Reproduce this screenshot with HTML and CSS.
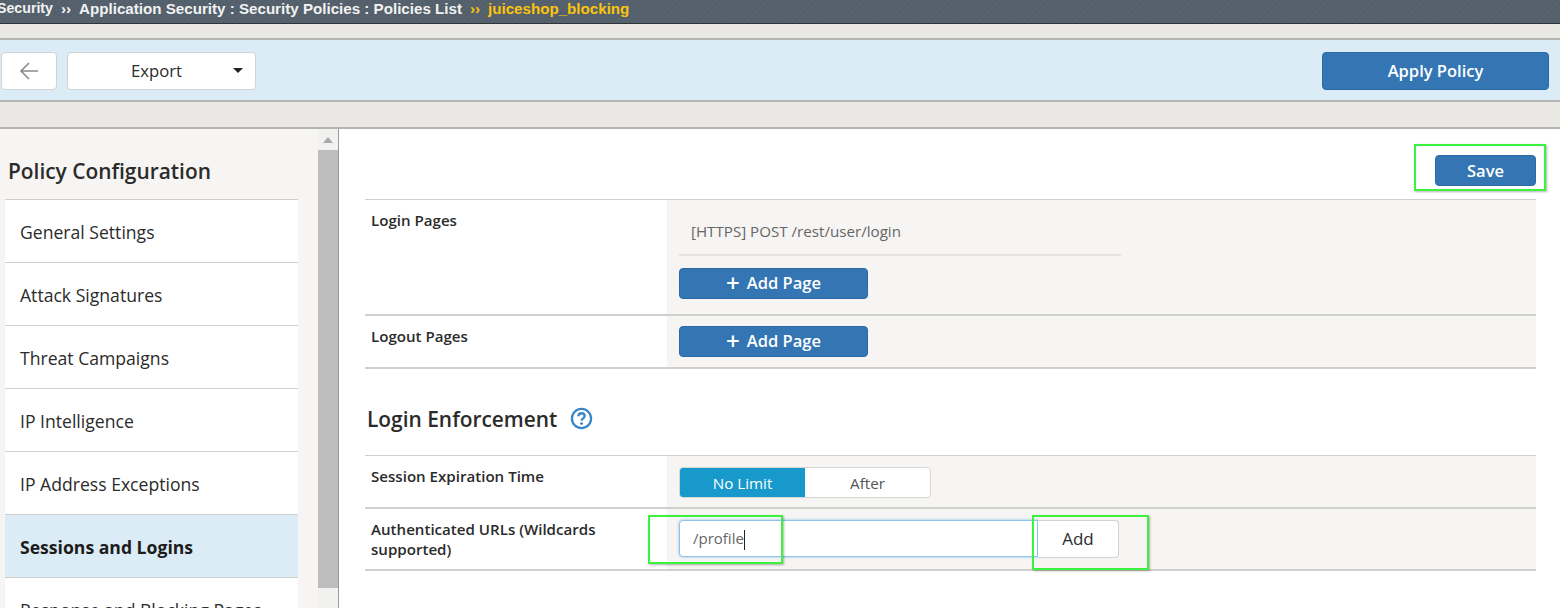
FILE: index.html
```html
<!DOCTYPE html>
<html lang="en">
<head>
    <meta charset="UTF-8">
    <title>Sessions and Logins</title>
    <link rel="stylesheet" href="styles.css">
</head>
<body>
    <header class="crumbs">
        <span class="crumb-first">Security</span>
        <span class="sep">››</span>
        <span>Application Security : Security Policies : Policies List</span>
        <span class="sep current">››</span>
        <span class="current">juiceshop_blocking</span>
    </header>
    <div class="strip strip-top"></div>
    <div class="toolbar">
        <button class="btn btn-back" aria-label="Back">
            <svg width="20" height="18" viewBox="0 0 20 18" fill="none" stroke="#8a8a8a" stroke-width="1.6"><path d="M19 9H2M10 1L2 9l8 8"/></svg>
        </button>
        <button class="btn btn-export"><span>Export</span><i class="caret"></i></button>
        <button class="btn-primary btn-apply">Apply Policy</button>
    </div>
    <div class="strip strip-bottom"></div>

    <div class="main">
        <aside class="sidebar">
            <div class="side-col">
                <h2>Policy Configuration</h2>
                <nav class="side-nav">
                    <a href="#">General Settings</a>
                    <a href="#">Attack Signatures</a>
                    <a href="#">Threat Campaigns</a>
                    <a href="#">IP Intelligence</a>
                    <a href="#">IP Address Exceptions</a>
                    <a href="#" class="active">Sessions and Logins</a>
                    <a href="#">Response and Blocking Pages</a>
                </nav>
            </div>
            <div class="scrollbar">
                <i class="arrow"></i>
                <div class="thumb"></div>
            </div>
        </aside>

        <section class="content">
            <div class="save-row">
                <button class="btn-primary btn-save">Save</button>
            </div>
            <div class="rows">
                <div class="row row-login">
                    <div class="label">Login Pages</div>
                    <div class="value">
                        <div class="page-item">[HTTPS] POST /rest/user/login</div>
                        <button class="btn-primary btn-add"><b>+</b>Add Page</button>
                    </div>
                </div>
                <div class="row row-logout">
                    <div class="label">Logout Pages</div>
                    <div class="value">
                        <button class="btn-primary btn-add"><b>+</b>Add Page</button>
                    </div>
                </div>
            </div>

            <h3 class="section-title">Login Enforcement
                <svg class="help-icon" width="23" height="23" viewBox="0 0 24 24" fill="none"><circle cx="12" cy="12" r="10" stroke="#3a85c6" stroke-width="2.4"/><path d="M8.8 9.6c0-2 1.500-3.100 3.300-3.100s3.200 1.100 3.200 2.800c0 2.500-3.200 2.500-3.200 5" stroke="#3a85c6" stroke-width="2.400"/><circle cx="12.100" cy="17.300" r="1.500" fill="#3a85c6"/></svg>
            </h3>

            <div class="rows">
                <div class="row row-session">
                    <div class="label">Session Expiration Time</div>
                    <div class="value value-form">
                        <div class="toggle">
                            <span class="on">No Limit</span>
                            <span>After</span>
                        </div>
                    </div>
                </div>
                <div class="row row-auth">
                    <div class="label">Authenticated URLs (Wildcards supported)</div>
                    <div class="value value-form url-group">
                        <div class="url-input">/profile<i class="cursor"></i></div>
                        <button class="btn btn-url">Add</button>
                    </div>
                </div>
            </div>
        </section>
    </div>

    <!-- green annotation boxes -->
    <div class="mark mark-save"></div>
    <div class="mark mark-input"></div>
    <div class="mark mark-add"></div>
</body>
</html>
```

FILE: styles.css
```css
:root {
    --primary-color: #3476b4;
    --border-color: #cfcfcd;
    --panel-color: #f6f5f3;
    --strip-color: #e9e8e4;
    --blue-light: #dbecf6;
    --text-color: #2b2b2b;
}

html, body {
    height: 608px;
    overflow: hidden;
}

body {
    margin: 0;
    font-family: 'Open Sans', sans-serif;
    color: var(--text-color);
    background: #ffffff;
}

button {
    font-family: inherit;
    cursor: pointer;
}

.crumbs {
    display: flex;
    align-items: center;
    gap: 6px;
    padding-bottom: 7px;
    height: 16px;
    background: repeating-linear-gradient(135deg, #535f6b 0, #535f6b 2px, #56626e 2px, #56626e 4px);
    border-bottom: 1px solid #2f3438;
    font-family: 'Liberation Sans', sans-serif;
    font-size: 15.15px;
    font-weight: 700;
    color: #f2f2f2;
    white-space: nowrap;
}

.crumb-first {
    margin-left: -3px;
    font-size: 14.2px;
}

.crumbs .sep {
    padding: 0 2px;
}

.crumbs .current {
    color: #fcc40c;
}

.strip {
    background: var(--strip-color);
    border-bottom: 2px solid #b4b4b2;
}

.strip-top {
    height: 14px;
}

.strip-bottom {
    height: 25px;
}

.toolbar {
    height: 59px;
    background: var(--blue-light);
    border-bottom: 2px solid #b4b4b2;
    display: flex;
    align-items: center;
    padding: 1px 11px 0 1px;
    gap: 10px;
}

.btn {
    background: #ffffff;
    border: 1px solid #cfd3d6;
    border-radius: 4px;
    font-size: 16.7px;
    color: var(--text-color);
}

.btn-back {
    width: 56px;
    height: 38px;
    padding: 0;
    display: flex;
    align-items: center;
    justify-content: center;
}

.btn-export {
    width: 189px;
    height: 38px;
    display: flex;
    align-items: center;
    padding: 0 12px 0 63px;
    justify-content: space-between;
}

.caret {
    width: 0;
    height: 0;
    border-left: 5.5px solid transparent;
    border-right: 5.5px solid transparent;
    border-top: 5px solid #222222;
}

.btn-primary {
    background: var(--primary-color);
    border: 1px solid #2c6aa5;
    border-radius: 4px;
    color: #ffffff;
    font-size: 16.5px;
    font-weight: 600;
    padding: 0;
}

.btn-apply {
    width: 227px;
    height: 38px;
    margin-left: auto;
}

.main {
    display: flex;
    height: 479px;
}

.sidebar {
    width: 338px;
    flex: none;
    display: flex;
    background: var(--panel-color);
    border-right: 1px solid #9b9b9b;
    overflow: hidden;
}

.side-col {
    width: 293px;
    flex: none;
    margin-left: 5px;
}

.side-col h2 {
    margin: 0;
    height: 70px;
    margin-left: 3px;
    padding-top: 27px;
    box-sizing: border-box;
    font-size: 20.9px;
    line-height: 30px;
    font-weight: 600;
}

.side-nav a {
    display: block;
    height: 62px;
    line-height: 64px;
    padding-left: 15px;
    background: #ffffff;
    border-top: 1px solid var(--border-color);
    font-size: 17.6px;
    color: var(--text-color);
    text-decoration: none;
    white-space: nowrap;
}

.side-nav a.active {
    background: var(--blue-light);
    font-weight: 700;
    color: #1c1c1c;
}

.scrollbar {
    width: 20px;
    margin-left: 20px;
    flex: none;
    padding-top: 21px;
    position: relative;
    background: #f1f1f0;
}

.scrollbar .arrow {
    position: absolute;
    top: 8px;
    left: 5px;
    border-left: 5px solid transparent;
    border-right: 5px solid transparent;
    border-bottom: 6px solid #a8a8a8;
}

.thumb {
    height: 438px;
    background: #bdbdbd;
}

.content {
    flex: 1;
    min-width: 0;
    padding: 0 24px 0 26px;
}

.save-row {
    height: 70px;
    display: flex;
    justify-content: flex-end;
    align-items: flex-start;
    padding-top: 26px;
    box-sizing: border-box;
}

.btn-save {
    width: 101px;
    height: 31px;
}

.rows {
    border-top: 1px solid var(--border-color);
}

.row {
    display: flex;
    border-bottom: 2px solid var(--border-color);
}

.label {
    width: 302px;
    flex: none;
    box-sizing: border-box;
    padding: 10px 30px 0 6px;
    font-size: 15.1px;
    line-height: 20px;
    font-weight: 600;
}

.value {
    flex: 1;
    background: var(--panel-color);
    padding: 10px 12px 0;
}

.value-form {
    padding-top: 11px;
}

.row-login {
    height: 114px;
}

.row-logout {
    height: 51px;
}

.row-session {
    height: 51px;
}

.row-auth {
    height: 60px;
}

.page-item {
    width: 442px;
    height: 46px;
    line-height: 42px;
    box-sizing: border-box;
    padding-left: 12px;
    font-size: 15.15px;
    color: #666666;
    border-bottom: 2px solid #e6e5e2;
    margin-bottom: 12px;
}

.btn-add {
    display: flex;
    align-items: center;
    justify-content: center;
    gap: 7px;
    width: 189px;
    height: 31px;
    padding-bottom: 2px;
}

.btn-add b {
    font-size: 24px;
    line-height: 22px;
    font-weight: 600;
}

.section-title {
    margin: 0;
    height: 86px;
    padding: 35px 0 0 2px;
    box-sizing: border-box;
    display: flex;
    align-items: flex-start;
    gap: 13px;
    font-size: 20.9px;
    line-height: 30px;
    font-weight: 600;
}

.help-icon {
    margin-top: 3px;
}

.toggle {
    display: flex;
    width: 252px;
    height: 31px;
    box-sizing: border-box;
    border: 1px solid #d6d6d4;
    border-radius: 4px;
    background: #ffffff;
    font-size: 15.2px;
    color: #555555;
    overflow: hidden;
}

.toggle span {
    flex: 1;
    line-height: 31px;
    text-align: center;
}

.toggle .on {
    background: #1799cc;
    color: #ffffff;
}

.url-group {
    display: flex;
    align-items: flex-start;
}

.url-input {
    width: 359px;
    height: 37px;
    box-sizing: border-box;
    border: 1px solid #8fc2ec;
    border-radius: 4px 0 0 4px;
    background: #ffffff;
    box-shadow: 0 0 3px #8fc2ec;
    padding-left: 13px;
    font-size: 15px;
    line-height: 35px;
    color: #666666;
}

.cursor {
    display: inline-block;
    width: 1px;
    height: 20px;
    background: #222222;
    vertical-align: middle;
}

.btn-url {
    width: 81px;
    height: 38px;
    border-left: 0;
    border-radius: 0 4px 4px 0;
    padding: 0 0 2px;
    font-size: 17px;
}

.mark {
    position: absolute;
    box-sizing: border-box;
    border: 2px solid #3df23d;
    box-shadow: 1px 1px 2px rgba(0, 0, 0, 0.3);
}

.mark-save {
    left: 1414px;
    top: 144px;
    width: 132px;
    height: 47px;
}

.mark-input {
    left: 648px;
    top: 515px;
    width: 135px;
    height: 49px;
}

.mark-add {
    left: 1032px;
    top: 515px;
    width: 117px;
    height: 55px;
}
```
